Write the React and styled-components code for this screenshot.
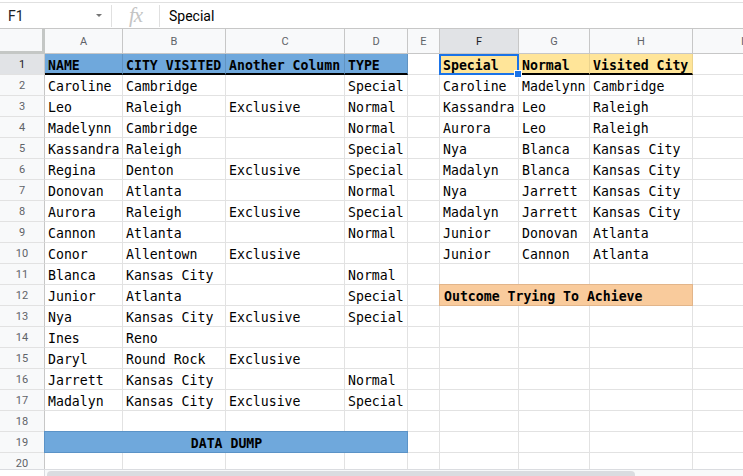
import React from 'react';
import styled, { createGlobalStyle } from 'styled-components';

const Global = createGlobalStyle`
  html, body { margin: 0; padding: 0; background: #fff; }
  body { font-family: Roboto, "Liberation Sans", sans-serif; }
`;

const BLUE = '#6fa8dc';
const YELLOW = '#ffe599';
const ORANGE = '#f9cb9c';

const Page = styled.div`
  width: 743px;
  height: 476px;
  overflow: hidden;
  display: flex;
  flex-direction: column;
  background: #fff;
`;

const FormulaBar = styled.div`
  margin-top: 2px;
  height: 27px;
  box-sizing: border-box;
  border-top: 1px solid #e0e0e0;
  border-bottom: 1px solid #c7c7c7;
  display: flex;
  align-items: center;
  flex-shrink: 0;
`;

const NameBox = styled.div`
  width: 111px;
  box-sizing: border-box;
  padding-left: 8px;
  padding-right: 9px;
  display: flex;
  align-items: center;
  justify-content: space-between;
  font-size: 14px;
  color: #202124;
`;

const Caret = styled.span`
  width: 0;
  height: 0;
  border-left: 3px solid transparent;
  border-right: 3px solid transparent;
  border-top: 3px solid #757575;
`;

const Divider = styled.div`
  width: 1px;
  height: 22px;
  background: #e0e0e0;
`;

const FxBox = styled.div`
  width: 47px;
  display: flex;
  justify-content: center;
  align-items: center;
  font-family: "Liberation Serif", "DejaVu Serif", serif;
  font-style: italic;
  font-size: 21px;
  color: #c4c4c4;
  letter-spacing: -1px;
`;

const FormulaText = styled.div`
  padding-left: 9px;
  font-size: 14px;
  color: #000;
`;

const SheetArea = styled.div`
  flex: 1;
  overflow: hidden;
  position: relative;
`;

const Grid = styled.div`
  display: grid;
  grid-template-columns: 45px 78px 103px 119px 63px 32px 79px 71px 103px 100px;
  grid-template-rows: 25px repeat(20, 21px);
  width: 793px;
`;

const Corner = styled.div`
  box-sizing: border-box;
  background: #f8f9fa;
  border-right: 3px solid #c4c7c5;
  border-bottom: 3px solid #c4c7c5;
`;

const ColHead = styled.div`
  box-sizing: border-box;
  background: ${p => (p.$active ? '#e1e3e6' : '#f8f9fa')};
  border-right: 1px solid #c7c7c7;
  border-bottom: 1px solid #c7c7c7;
  display: flex;
  align-items: center;
  justify-content: center;
  font-size: 11px;
  color: ${p => (p.$active ? '#202124' : '#5f6368')};
`;

const RowHead = styled.div`
  box-sizing: border-box;
  background: ${p => (p.$active ? '#e1e3e6' : '#f8f9fa')};
  border-right: 1px solid #c7c7c7;
  border-bottom: 1px solid #e2e2e2;
  display: flex;
  align-items: center;
  justify-content: center;
  font-size: 11px;
  color: ${p => (p.$active ? '#202124' : '#5f6368')};
`;

const Cell = styled.div`
  box-sizing: border-box;
  position: relative;
  grid-column: ${p => (p.$span ? `span ${p.$span}` : 'auto')};
  background: ${p => p.$fill || '#fff'};
  border-right: 1px solid ${p => p.$edge || '#e2e2e2'};
  border-bottom: ${p => (p.$thick ? '2px solid #000' : `1px solid ${p.$edge || '#e2e2e2'}`)};
  border-left: ${p => (p.$box ? `1px solid ${p.$edge}` : 'none')};
  border-top: ${p => (p.$box ? `1px solid ${p.$edge}` : 'none')};
  margin-top: ${p => (p.$box ? '-1px' : '0')};
  margin-left: ${p => (p.$box ? '-1px' : '0')};
  padding: ${p => (p.$box ? '2px' : '3px')} 3px 0 ${p => (p.$box ? '4px' : '3px')};
  display: flex;
  align-items: center;
  justify-content: ${p => (p.$center ? 'center' : 'flex-start')};
  font-family: "DejaVu Sans Mono", "Liberation Mono", monospace;
  font-size: 13.2px;
  font-weight: ${p => (p.$bold ? 700 : 400)};
  color: #000;
  white-space: nowrap;
  overflow: ${p => (p.$overflow ? 'visible' : 'hidden')};
  z-index: ${p => (p.$sel ? 2 : 'auto')};
`;

const Selection = styled.div`
  position: absolute;
  top: 0;
  left: -1px;
  right: -1px;
  bottom: -2px;
  border: 2px solid #1a73e8;
  pointer-events: none;
`;

const Handle = styled.div`
  position: absolute;
  right: -5px;
  bottom: -5px;
  width: 6px;
  height: 6px;
  background: #1a73e8;
  border: 1px solid #fff;
`;

const ScrollRow = styled.div`
  height: 7px;
  flex-shrink: 0;
  display: flex;
  border-top: 1px solid #dadce0;
  box-sizing: border-box;
`;

const ScrollGutter = styled.div`
  width: 45px;
  background: #fff;
  border-right: 1px solid #dadce0;
  box-sizing: border-box;
`;

const ScrollTrack = styled.div`
  flex: 1;
  background: #f8f9fa;
  padding: 1px 0 0 2px;
`;

const Thumb = styled.div`
  width: 588px;
  height: 8px;
  background: #dadce0;
  border-radius: 4px 4px 0 0;
`;

const LETTERS = ['A', 'B', 'C', 'D', 'E', 'F', 'G', 'H', 'I'];

const left = [
  ['Caroline', 'Cambridge', '', 'Special'],
  ['Leo', 'Raleigh', 'Exclusive', 'Normal'],
  ['Madelynn', 'Cambridge', '', 'Normal'],
  ['Kassandra', 'Raleigh', '', 'Special'],
  ['Regina', 'Denton', 'Exclusive', 'Special'],
  ['Donovan', 'Atlanta', '', 'Normal'],
  ['Aurora', 'Raleigh', 'Exclusive', 'Special'],
  ['Cannon', 'Atlanta', '', 'Normal'],
  ['Conor', 'Allentown', 'Exclusive', ''],
  ['Blanca', 'Kansas City', '', 'Normal'],
  ['Junior', 'Atlanta', '', 'Special'],
  ['Nya', 'Kansas City', 'Exclusive', 'Special'],
  ['Ines', 'Reno', '', ''],
  ['Daryl', 'Round Rock', 'Exclusive', ''],
  ['Jarrett', 'Kansas City', '', 'Normal'],
  ['Madalyn', 'Kansas City', 'Exclusive', 'Special'],
];

const right = [
  ['Caroline', 'Madelynn', 'Cambridge'],
  ['Kassandra', 'Leo', 'Raleigh'],
  ['Aurora', 'Leo', 'Raleigh'],
  ['Nya', 'Blanca', 'Kansas City'],
  ['Madalyn', 'Blanca', 'Kansas City'],
  ['Nya', 'Jarrett', 'Kansas City'],
  ['Madalyn', 'Jarrett', 'Kansas City'],
  ['Junior', 'Donovan', 'Atlanta'],
  ['Junior', 'Cannon', 'Atlanta'],
];

function renderRow(r) {
  const cells = [];
  const key = i => `${r}-${i}`;
  if (r === 1) {
    ['NAME', 'CITY VISITED', 'Another Column', 'TYPE'].forEach((t, i) =>
      cells.push(
        <Cell key={key(i)} $fill={BLUE} $edge="rgba(0,0,0,0.12)" $thick $bold>
          {t}
        </Cell>
      )
    );
    cells.push(<Cell key={key(4)} />);
    cells.push(
      <Cell key={key(5)} $fill={YELLOW} $edge="rgba(0,0,0,0.08)" $thick $bold $overflow $sel>
        Special
        <Selection>
          <Handle />
        </Selection>
      </Cell>
    );
    cells.push(
      <Cell key={key(6)} $fill={YELLOW} $edge="rgba(0,0,0,0.08)" $thick $bold>
        Normal
      </Cell>
    );
    cells.push(
      <Cell key={key(7)} $fill={YELLOW} $edge="rgba(0,0,0,0.08)" $thick $bold>
        Visited City
      </Cell>
    );
    cells.push(<Cell key={key(8)} />);
    return cells;
  }
  if (r === 19) {
    cells.push(
      <Cell key={key(0)} $span={4} $fill={BLUE} $edge="#5b93c7" $box $bold $center>
        DATA DUMP
      </Cell>
    );
    for (let i = 4; i < 9; i++) cells.push(<Cell key={key(i)} />);
    return cells;
  }
  const l = left[r - 2] || ['', '', '', ''];
  l.forEach((t, i) => cells.push(<Cell key={key(i)}>{t}</Cell>));
  cells.push(<Cell key={key(4)} />);
  if (r === 12) {
    cells.push(
      <Cell key={key(5)} $span={3} $fill={ORANGE} $edge="#e2b58a" $box $bold>
        Outcome Trying To Achieve
      </Cell>
    );
  } else {
    const rr = right[r - 2] || ['', '', ''];
    rr.forEach((t, i) => cells.push(<Cell key={key(5 + i)}>{t}</Cell>));
  }
  cells.push(<Cell key={key(8)} />);
  return cells;
}

export default function App() {
  const rows = [];
  for (let r = 1; r <= 20; r++) {
    rows.push(
      <RowHead key={`h${r}`} $active={r === 1}>
        {r}
      </RowHead>
    );
    rows.push(...renderRow(r));
  }
  return (
    <Page>
      <Global />
      <FormulaBar>
        <NameBox>
          F1
          <Caret />
        </NameBox>
        <Divider />
        <FxBox>fx</FxBox>
        <Divider />
        <FormulaText>Special</FormulaText>
      </FormulaBar>
      <SheetArea>
        <Grid>
          <Corner />
          {LETTERS.map(l => (
            <ColHead key={l} $active={l === 'F'}>
              {l}
            </ColHead>
          ))}
          {rows}
        </Grid>
      </SheetArea>
      <ScrollRow>
        <ScrollGutter />
        <ScrollTrack>
          <Thumb />
        </ScrollTrack>
      </ScrollRow>
    </Page>
  );
}
